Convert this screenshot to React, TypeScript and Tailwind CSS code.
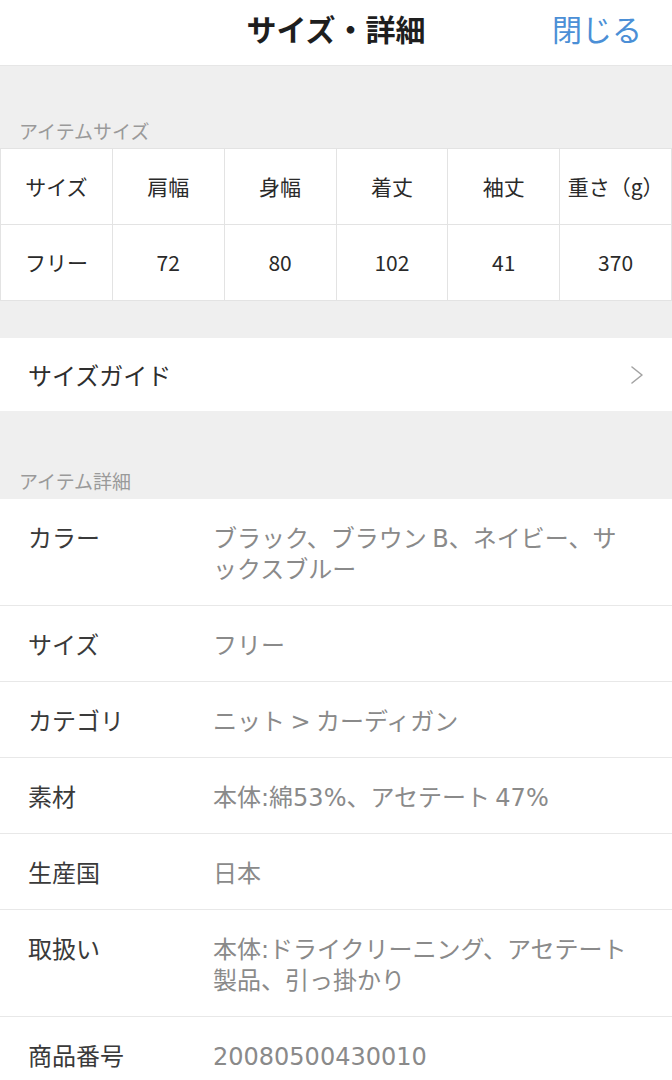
import React from "react";

const FONT = "font-['Hiragino_Sans','Noto_Sans_CJK_JP',sans-serif]";

const SIZE_HEAD = ["サイズ", "肩幅", "身幅", "着丈", "袖丈", "重さ（g）"];
const SIZE_ROW = ["フリー", "72", "80", "102", "41", "370"];

const DETAILS: { label: string; value: string }[] = [
  { label: "カラー", value: "ブラック、ブラウン B、ネイビー、サックスブルー" },
  { label: "サイズ", value: "フリー" },
  { label: "カテゴリ", value: "ニット > カーディガン" },
  { label: "素材", value: "本体:綿53%、アセテート 47%" },
  { label: "生産国", value: "日本" },
  { label: "取扱い", value: "本体:ドライクリーニング、アセテート製品、引っ掛かり" },
  { label: "商品番号", value: "20080500430010" },
];

// Hiragino's latin/digits run wider than Noto's; DejaVu is the closest match,
// so latin runs get their own span and the kana keep the Noto baseline.
function withLatin(text: string) {
  return text.split(/([0-9A-Za-z%:>]+)/).map((part, i) =>
    i % 2 === 1 ? (
      <span key={i} className="font-['DejaVu_Sans',sans-serif] leading-none">
        {part}
      </span>
    ) : (
      part
    ),
  );
}

export default function App() {
  return (
    <div className={`min-h-screen w-[672px] bg-white ${FONT}`}>
      <header className="grid h-[66px] grid-cols-[1fr_auto_1fr] items-center border-b border-[#e6e6e6] bg-white pb-[10px]">
        <div />
        <h1 className="text-[30px] font-bold leading-none text-[#1e1e1e]">サイズ・詳細</h1>
        <button className="justify-self-end pr-[30px] text-[30px] leading-none text-[#4b8fd6]">
          閉じる
        </button>
      </header>

      <SectionLabel height="h-[82px]" pb="pb-[5px]">
        アイテムサイズ
      </SectionLabel>

      <div className="grid grid-cols-6 border-l border-t border-[#e3e3e3] bg-white">
        {SIZE_HEAD.map((h) => (
          <Cell key={h}>{h}</Cell>
        ))}
        {SIZE_ROW.map((v, i) => (
          <Cell key={i}>{v}</Cell>
        ))}
      </div>

      <div className="h-[37px] bg-[#efefef]" />

      <div className="flex h-[73px] items-center justify-between bg-white pl-[28px] pr-[28px]">
        <span className="text-[24px] text-[#2e2e2e]">サイズガイド</span>
        <svg width="14" height="20" viewBox="0 0 14 20" fill="none">
          <polyline
            points="2,2 12,10 2,18"
            stroke="#a3a3a3"
            strokeWidth="1.6"
            strokeLinecap="round"
            strokeLinejoin="round"
          />
        </svg>
      </div>

      <SectionLabel height="h-[88px]" pb="pb-[6px]">
        アイテム詳細
      </SectionLabel>

      <div className="bg-white">
        {DETAILS.map((d) => (
          <div
            key={d.label}
            className="flex items-start border-b border-[#e8e8e8] py-[22px] pl-[28px] pr-[40px] text-[24px] leading-[31px]"
          >
            <div className="w-[185px] shrink-0 text-[#3a3a3a]">{d.label}</div>
            <div className="min-w-0 flex-1 text-[#8a8a8a]">{withLatin(d.value)}</div>
          </div>
        ))}
      </div>
    </div>
  );
}

function SectionLabel({
  children,
  height,
  pb,
}: {
  children: React.ReactNode;
  height: string;
  pb: string;
}) {
  return (
    <div className={`flex items-end bg-[#efefef] px-[19px] ${height} ${pb}`}>
      <span className="text-[19px] leading-[24px] text-[#9a9a9a]">{children}</span>
    </div>
  );
}

function Cell({ children }: { children: React.ReactNode }) {
  return (
    <div className="flex h-[76px] items-center justify-center border-b border-r border-[#e3e3e3] text-[21px] text-[#2a2a2a]">
      {children}
    </div>
  );
}
